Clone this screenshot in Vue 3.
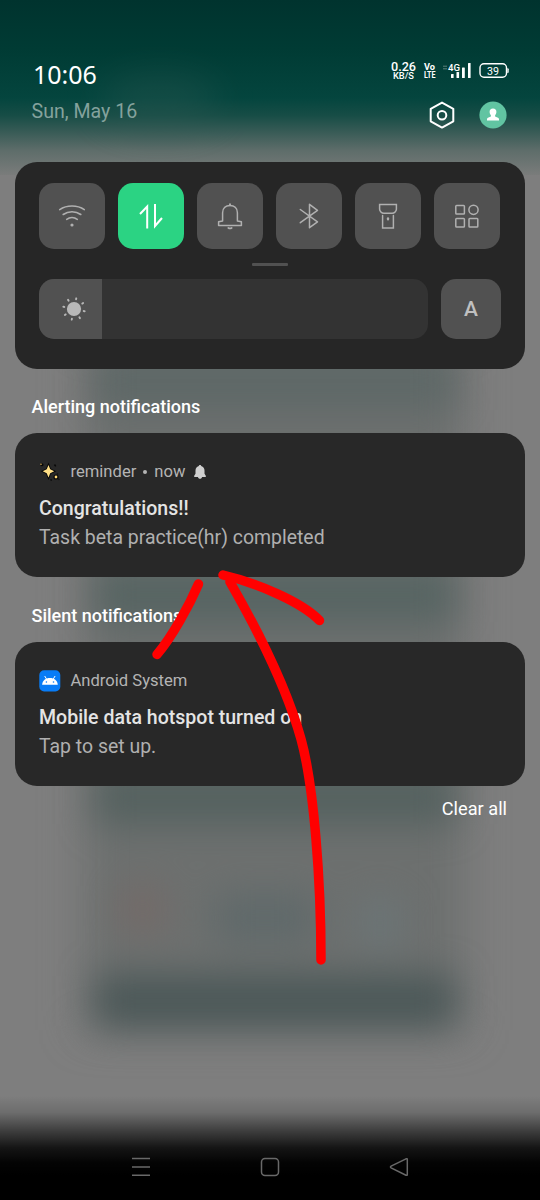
<script setup>
const tiles = ['wifi', 'data', 'bell', 'bluetooth', 'torch', 'apps']
</script>

<template>
  <div class="screen">
    <svg class="backdrop" width="540" height="1200" viewBox="0 0 540 1200" aria-hidden="true">
      <defs>
        <filter id="soft" x="-30%" y="-100%" width="160%" height="300%" color-interpolation-filters="sRGB"><feGaussianBlur stdDeviation="20" /></filter>
        <filter id="mid" x="-40%" y="-100%" width="180%" height="300%" color-interpolation-filters="sRGB"><feGaussianBlur stdDeviation="18" /></filter>
        <linearGradient id="top" x1="0" y1="0" x2="0" y2="1">
          <stop offset="0" stop-color="#00332e" />
          <stop offset=".28" stop-color="#003b34" />
          <stop offset=".56" stop-color="#04453e" />
          <stop offset=".66" stop-color="#174d46" />
          <stop offset=".76" stop-color="#3a5c57" />
          <stop offset=".86" stop-color="#5e6d6a" />
          <stop offset="1" stop-color="#7a7c7b" />
        </linearGradient>
        <linearGradient id="bottom" x1="0" y1="0" x2="0" y2="1">
          <stop offset="0" stop-color="#000" stop-opacity="0" />
          <stop offset=".16" stop-color="#000" stop-opacity=".14" />
          <stop offset=".34" stop-color="#000" stop-opacity=".52" />
          <stop offset=".5" stop-color="#000" stop-opacity=".84" />
          <stop offset=".64" stop-color="#000" stop-opacity=".97" />
          <stop offset=".76" stop-color="#000" />
          <stop offset="1" stop-color="#000" />
        </linearGradient>
      </defs>
      <rect width="540" height="1200" fill="#7e7e7e" />
      <rect x="84" y="340" width="380" height="690" fill="#6d706f" filter="url(#soft)" />
      <g filter="url(#mid)">
        <rect x="96" y="352" width="358" height="58" fill="#5e6867" />
        <rect x="96" y="568" width="358" height="54" fill="#566462" />
        <rect x="96" y="770" width="358" height="54" fill="#54615f" />
        <rect x="96" y="976" width="358" height="50" fill="#4a5757" />
        <rect x="215" y="895" width="100" height="46" fill="#5f696a" />
        <rect x="120" y="886" width="45" height="46" fill="#746a68" />
        <rect x="360" y="900" width="40" height="46" fill="#6b7577" />
      </g>
      <rect width="540" height="175" fill="url(#top)" />
      <ellipse cx="160" cy="100" rx="60" ry="26" fill="#335b55" opacity=".35" filter="url(#mid)" />
      <rect y="1096" width="540" height="104" fill="url(#bottom)" />
    </svg>

    <header class="header">
      <div class="clock">
        <div class="time">10:06</div>
        <div class="date">Sun, May 16</div>
      </div>
      <div class="status">
        <svg class="indicators" width="120" height="22" viewBox="390 60 120 22">
          <g fill="#fff" class="tiny">
            <text x="391" y="71" font-size="12" class="regular" textLength="25" lengthAdjust="spacingAndGlyphs">0.26</text>
            <text x="393" y="79.300" font-size="9" class="regular" textLength="21" lengthAdjust="spacingAndGlyphs">KB/S</text>
            <text x="424" y="70.300" font-size="9.500" textLength="11" lengthAdjust="spacingAndGlyphs">Vo</text>
            <text x="424" y="78.300" font-size="9.500" textLength="11.500" lengthAdjust="spacingAndGlyphs">LTE</text>
            <text x="448" y="71" font-size="9.500" class="regular" textLength="12" lengthAdjust="spacingAndGlyphs">4G</text>
            <text x="487" y="74.500" font-size="11.500" class="light" textLength="12" lengthAdjust="spacingAndGlyphs">39</text>
            <rect x="451" y="74" width="2.600" height="4" rx=".5" />
            <rect x="456.500" y="72" width="2.600" height="6" rx=".5" />
            <rect x="462" y="67.500" width="2.800" height="10.500" rx=".5" />
            <rect x="468" y="63" width="2.600" height="15" rx=".5" />
            <path d="M507.300 68.300h.4a1 1 0 0 1 1 1v2.800a1 1 0 0 1-1 1h-.4z" />
          </g>
          <rect x="480" y="63.700" width="26.500" height="13.600" rx="4" fill="none" stroke="#fff" stroke-width="1.400" />
          <path d="M443 66.200h4M443 68.800h4" stroke="#5d817b" stroke-width="1" />
        </svg>
        <div class="shortcuts">
          <svg width="28" height="30" viewBox="0 0 28 30" fill="none" stroke="#fff" stroke-linejoin="round">
            <path d="M14 2.600 25.300 8.800V21.300L14 27.600 2.700 21.300V8.800z" stroke-width="2" />
            <circle cx="14" cy="15.200" r="4.300" stroke-width="2" />
          </svg>
          <svg width="28" height="28" viewBox="0 0 28 28">
            <circle cx="14" cy="14" r="13.600" fill="#61c4a2" />
            <path d="M14 7.500c2.200 0 3.500 1.500 3.400 3.500-.1 1.500-.6 2.500-1.300 3.200v1.300c1.200.7 3.700.9 3.900 2.500v1.500H8v-1.500c.2-1.600 2.700-1.800 3.900-2.500v-1.300c-.7-.7-1.200-1.700-1.300-3.200-.1-2 1.200-3.500 3.400-3.500z" fill="#fff" />
          </svg>
        </div>
      </div>
    </header>

    <section class="panel">
      <div class="tiles">
        <div v-for="t in tiles" :key="t" class="tile" :class="{ on: t === 'data' }">
          <svg width="30" height="30" viewBox="0 0 30 30" fill="none" stroke="currentColor" stroke-width="1.500" stroke-linecap="round" stroke-linejoin="round">
            <template v-if="t === 'wifi'">
              <path d="M2.700 8.600C9.800 3.800 20.200 3.800 27.300 8.600M6.200 13.500C11.300 9.900 18.700 9.900 23.800 13.500M9.700 18.300C12.800 16 17.200 16 20.300 18.300" stroke-width="1.600" />
              <circle cx="15" cy="24" r="1.600" fill="currentColor" stroke="none" />
            </template>
            <path v-else-if="t === 'data'" d="M4 13 11.200 5.500V27.500M19 3V25L26 17" stroke-width="2" stroke-linejoin="miter" stroke-linecap="butt" />
            <template v-else-if="t === 'bell'">
              <path d="M7.600 20V11.800C7.600 7 10.800 4.500 15 4.500S22.400 7 22.400 11.800V20l4 .8v3.700H3.600v-3.700z" />
              <path d="M15 4.200V3.300M13.400 27q1.600.8 3.200 0" stroke-width="1.900" />
            </template>
            <path v-else-if="t === 'bluetooth'" d="M6.300 8.500 23.500 20.900 15.500 26.700V3.300L23.500 9.300 6.300 21.700" />
            <template v-else-if="t === 'torch'">
              <path d="M6.600 3.500h16.800v4.800c0 1.700-2 4-4.200 4h-8.400c-2.200 0-4.200-2.300-4.200-4zM9.600 14.500V27h10.800V14.500" stroke-linejoin="miter" />
              <path d="M15 17.300v1.200" stroke-width="2.200" />
            </template>
            <template v-else>
              <rect x="3.800" y="4.500" width="8.600" height="8.600" rx=".8" />
              <circle cx="21.500" cy="8.800" r="4.600" />
              <rect x="3.800" y="17.400" width="8.600" height="8.600" rx=".8" />
              <rect x="17" y="17.400" width="8.800" height="8.600" rx=".8" />
            </template>
          </svg>
        </div>
      </div>
      <div class="handle"></div>
      <div class="brightness">
        <div class="slider">
          <div class="level">
            <svg width="26" height="26" viewBox="-13 -13 26 26" fill="#b8b8b8">
              <circle r="7.100" />
              <g stroke="#b8b8b8" stroke-width="1.900" stroke-linecap="round">
                <path v-for="n in 8" :key="n" d="M0-10.900V-9.900" :transform="`rotate(${n * 45 + 12})`" />
              </g>
            </svg>
          </div>
        </div>
        <div class="auto">A</div>
      </div>
    </section>

    <h2 class="heading">Alerting notifications</h2>
    <article class="card">
      <div class="source">
        <svg width="22" height="22" viewBox="0 0 22 22">
          <path d="M9.500 4 11.200 8.300l4 1.900-4 2L9.500 16.500 7.700 12.200l-4-2 4-1.900z" fill="#ffdf86" stroke="#080808" stroke-width="1.800" paint-order="stroke" />
          <circle cx="17" cy="16" r="2" fill="#ffd873" stroke="#080808" stroke-width="1.200" />
          <circle cx="3" cy="3.800" r="1.500" fill="#070707" /><circle cx="2" cy="3.200" r=".8" fill="#cda54f" />
          <path d="M15.500 3.500l1.200 1.800M11.500 18.500l1.200 1M19.500 18.500l.8-.4M18.500 12.500v1" stroke="#080808" stroke-width="1.500" />
        </svg>
        <span class="app">reminder</span><span class="dot"></span><span class="app">now</span>
        <svg class="alarm" width="14" height="16" viewBox="0 0 14 16" fill="#d0d0d0">
          <path d="M7 1c.7 0 1.200.5 1.200 1.100 2.200.6 3.300 2.300 3.300 4.500v3.200l1.300 1.900v1.400H1.200v-1.400l1.300-1.900V6.600c0-2.200 1.100-3.900 3.300-4.500C5.800 1.500 6.300 1 7 1zM5 13h4c0 2.400-4 2.400-4 0z" />
        </svg>
      </div>
      <div class="title">Congratulations!!</div>
      <div class="body">Task beta practice(hr) completed</div>
    </article>

    <h2 class="heading second">Silent notifications</h2>
    <article class="card">
      <div class="source">
        <svg width="22" height="22" viewBox="0 0 22 22">
          <rect x=".3" y=".3" width="21" height="21.200" rx="4.800" fill="#087cf6" />
          <path d="M7.500 9 5.700 6M14.300 9l1.800-3" stroke="#fff" stroke-width="1" fill="none" />
          <path d="M3.100 14.700C3.500 10.300 6.600 8 10.900 8s7.500 2.300 7.900 6.700z" fill="#fff" />
          <circle cx="7.400" cy="12" r=".8" fill="#087cf6" /><circle cx="14.500" cy="12" r=".8" fill="#087cf6" />
        </svg>
        <span class="app">Android System</span>
      </div>
      <div class="title">Mobile data hotspot turned on</div>
      <div class="body">Tap to set up.</div>
    </article>

    <div class="clear">Clear all</div>

    <nav class="nav">
      <svg width="22" height="22" viewBox="0 0 22 22"><path d="M2 2.500h18M2 11h18M2 19.300h18" /></svg>
      <svg width="22" height="22" viewBox="0 0 22 22"><rect x="2.500" y="2.500" width="17" height="17" rx="3.500" /></svg>
      <svg width="22" height="22" viewBox="0 0 22 22"><path d="M18 2.800 3.100 10.200q-1.300.8 0 1.600L18 19.200q1.300.5 1.300-.8V3.600q0-1.300-1.300-.8z" /></svg>
    </nav>

    <svg class="scribble" width="540" height="1200" viewBox="0 0 540 1200" fill="none" stroke="#f00" stroke-width="9.500" stroke-linecap="round" stroke-linejoin="round" aria-hidden="true">
      <path d="M198.500 584C189 606 172 637 157 654.500" />
      <path d="M223 575C257 583 302 602 319.500 620.500" />
      <path d="M230 582C261 636 287 689 301 739C314 786 321 881 321 960" />
    </svg>
  </div>
</template>

<style>
body { margin: 0; background: #000; }
</style>

<style scoped>
.screen {
  position: relative;
  width: 540px;
  height: 1200px;
  overflow: hidden;
  display: flex;
  flex-direction: column;
  font-family: Roboto, "Liberation Sans", sans-serif;
}
.screen > * { position: relative; flex-shrink: 0; box-sizing: border-box; }
.screen > .backdrop, .screen > .scribble { position: absolute; inset: 0; }
svg { display: block; flex-shrink: 0; }
.header { height: 162px; padding: 59px 31px 0 31.500px; display: flex; justify-content: space-between; }
.time { font: 400 25px/30px "Noto Sans", sans-serif; color: #fff; padding-left: 1.500px; }
.date { font-size: 19.600px; line-height: 24px; margin-top: 11px; color: #84a29d; }
.status { display: flex; flex-direction: column; align-items: flex-end; padding-top: 1px; margin-right: -1px; }
.tiny { font-family: Roboto, sans-serif; font-weight: 700; }
.regular { font-weight: 500; }
.light { font-weight: 400; }
.shortcuts { display: flex; align-items: center; gap: 23px; margin-top: 18px; padding-right: 3px; }
.panel { margin: 0 15px; height: 207px; padding: 21px 24px 0; border-radius: 22px; background: #262626; }
.tiles { display: flex; gap: 13px; }
.tile { width: 66px; height: 66px; border-radius: 15px; background: #515151; color: #b0b0b0; display: flex; align-items: center; justify-content: center; }
.tile.on { background: #2bd383; color: #fff; }
.handle { width: 36px; height: 3px; margin: 13.500px auto 13.500px; border-radius: 1px; background: #515151; }
.brightness { display: flex; gap: 13px; }
.slider { width: 389px; height: 60px; border-radius: 15px; background: #333; overflow: hidden; }
.level { width: 62.500px; height: 60px; background: #515151; display: flex; align-items: center; padding-left: 21.500px; box-sizing: border-box; }
.auto { width: 60px; height: 60px; border-radius: 15px; background: #515151; color: #c0c0c0; font-size: 21px; font-weight: 500; line-height: 61px; text-align: center; }
.heading { margin: 28px 0 16.400px 31.500px; font-size: 18px; line-height: 20px; font-weight: 500; color: #fff; }
.heading.second { margin-top: 28.500px; }
.card { margin: 0 15px; height: 144px; padding: 27.600px 24px 0; border-radius: 22px; background: #282828; }
.source { display: flex; align-items: center; height: 22px; font-size: 16.600px; color: #b4b4b4; }
.app { margin-left: 9.500px; }
.dot { width: 4px; height: 4px; margin-left: 7px; border-radius: 50%; background: #b4b4b4; }
.dot + .app { margin-left: 7px; }
.alarm { margin-left: 8px; }
.title { margin-top: 14px; font-size: 19.550px; line-height: 24px; font-weight: 500; color: #e4e4e4; }
.body { margin-top: 5.500px; font-size: 19.450px; line-height: 24px; color: #b0b0b0; }
.clear { margin: 12px 33px 0 0; font-size: 18.200px; line-height: 22px; text-align: right; color: #fff; }
.nav { margin-top: auto; padding: 0 130px 22px; display: flex; justify-content: space-between; fill: none; stroke: #696969; stroke-width: 1.500; }
</style>
